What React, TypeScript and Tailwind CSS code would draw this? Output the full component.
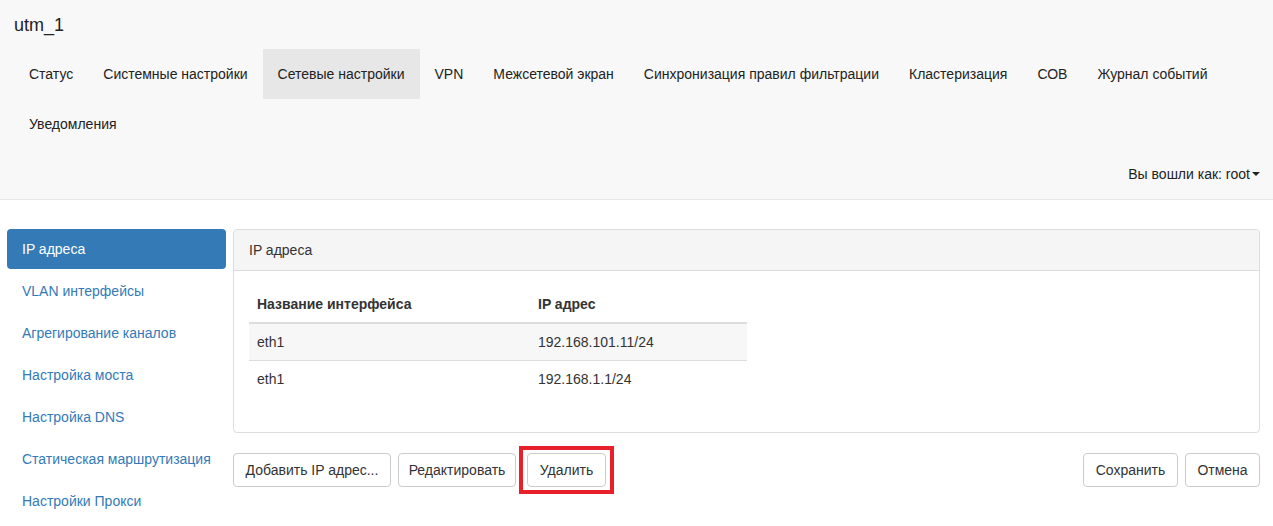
export default function App() {
  const topNav = [
    "Статус",
    "Системные настройки",
    "Сетевые настройки",
    "VPN",
    "Межсетевой экран",
    "Синхронизация правил фильтрации",
    "Кластеризация",
    "СОВ",
    "Журнал событий",
    "Уведомления",
  ];

  const sideNav = [
    "IP адреса",
    "VLAN интерфейсы",
    "Агрегирование каналов",
    "Настройка моста",
    "Настройка DNS",
    "Статическая маршрутизация",
    "Настройки Прокси",
  ];

  const rows = [
    { name: "eth1", ip: "192.168.101.11/24" },
    { name: "eth1", ip: "192.168.1.1/24" },
  ];

  const btn =
    "h-[34px] flex items-center justify-center whitespace-nowrap border border-[#ccc] rounded bg-white text-[14px] leading-5 text-[#333]";

  return (
    <div className="w-[1273px] h-[526px] overflow-hidden bg-white font-['Liberation_Sans',Arial,sans-serif] text-[14px] leading-5 text-[#333]">
      {/* Top navbar */}
      <header className="bg-[#f8f8f8] border-b border-[#e7e7e7] h-[200px] flex flex-col">
        <div className="h-[49px] flex items-center px-[14px] text-[18px] text-[#222]">
          utm_1
        </div>
        <nav className="flex flex-wrap pl-[14px] pr-[40px]">
          {topNav.map((item) => (
            <div
              key={item}
              className={`h-[50px] px-[15px] flex items-center text-[#222] ${
                item === "Сетевые настройки" ? "bg-[#e7e7e7]" : ""
              }`}
            >
              {item}
            </div>
          ))}
        </nav>
        <div className="h-[50px] flex items-center justify-end pr-[13px] text-[#222]">
          Вы вошли как: root
          <span className="ml-[2px] inline-block w-0 h-0 border-x-[4px] border-x-transparent border-t-[4px] border-t-[#222]" />
        </div>
      </header>

      {/* Content */}
      <div className="flex gap-[7px] pl-[7px] pr-[13px] pt-[29px]">
        {/* Sidebar */}
        <ul className="w-[219px] shrink-0 flex flex-col gap-[2px]">
          {sideNav.map((item, idx) => (
            <li
              key={item}
              className={`h-10 px-[15px] flex items-center rounded ${
                idx === 0 ? "bg-[#337ab7] text-white" : "text-[#337ab7]"
              }`}
            >
              {item}
            </li>
          ))}
        </ul>

        {/* Main */}
        <div className="flex-1 flex flex-col">
          <div className="border border-[#ddd] rounded">
            <div className="h-[41px] bg-[#f5f5f5] border-b border-[#ddd] rounded-t px-[15px] flex items-center">
              IP адреса
            </div>
            <div className="p-[15px] pb-[35px]">
              <table className="w-[498px] border-collapse">
                <thead>
                  <tr className="border-b-2 border-[#ddd]">
                    <th className="w-[281px] p-2 text-left font-bold">Название интерфейса</th>
                    <th className="p-2 text-left font-bold">IP адрес</th>
                  </tr>
                </thead>
                <tbody>
                  {rows.map((r, idx) => (
                    <tr
                      key={r.ip}
                      className={`border-t border-[#ddd] ${idx % 2 === 0 ? "bg-[#f7f7f7]" : ""}`}
                    >
                      <td className="p-2">{r.name}</td>
                      <td className="p-2">{r.ip}</td>
                    </tr>
                  ))}
                </tbody>
              </table>
            </div>
          </div>

          {/* Buttons */}
          <div className="mt-[13px] flex items-center">
            <button className={`${btn} w-[158px]`}>Добавить IP адрес...</button>
            <button className={`${btn} w-[118px] ml-[7px]`}>Редактировать</button>
            <div className="ml-[3px] border-4 border-[#e8202a] px-1 py-[3px]">
              <button className={`${btn} w-[79px]`}>Удалить</button>
            </div>
            <div className="ml-auto flex gap-[7px]">
              <button className={`${btn} w-[95px]`}>Сохранить</button>
              <button className={`${btn} w-[75px]`}>Отмена</button>
            </div>
          </div>
        </div>
      </div>
    </div>
  );
}
